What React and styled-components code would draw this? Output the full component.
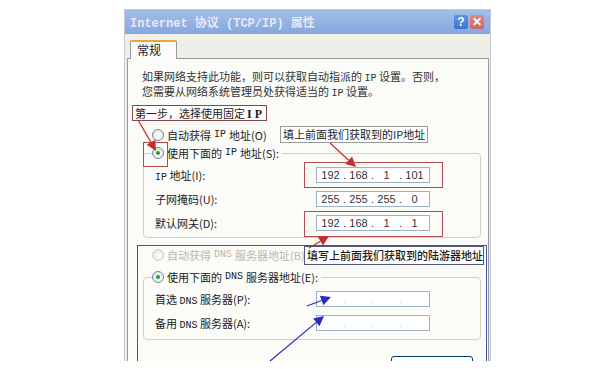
import styled, { createGlobalStyle } from 'styled-components';

const CJK = `"Noto Sans CJK SC", "Noto Sans", sans-serif`;

const GlobalStyle = createGlobalStyle`
  html, body { margin: 0; padding: 0; background: #fff; }
  * { box-sizing: border-box; }
`;

const Page = styled.div`
  position: relative;
  width: 600px;
  height: 369px;
  overflow: hidden;
  padding: 9px 0 0 124px;
  background: #fff;
  font-family: ${CJK};
`;

const Window = styled.div`
  width: 367px;
  height: 352px;
  overflow: hidden;
  background: #efeee7;
  border: 1px solid #c3cad6;
  border-bottom: none;
`;

const TitleBar = styled.div`
  height: 24px;
  display: flex;
  align-items: center;
  padding: 0 6px 0 5px;
  background: linear-gradient(#a3bde8, #86a7de);
`;

const Title = styled.div`
  font-family: "Liberation Mono", ${CJK};
  font-size: 12px;
  font-weight: bold;
  color: #e3e9f4;
  white-space: nowrap;
`;

const CapButtons = styled.div`
  display: flex;
  gap: 2px;
  margin-left: auto;
`;

const CapButton = styled.div`
  width: 14px;
  height: 14px;
  border-radius: 2px;
  background: ${(p) => p.$bg};
  color: #fff;
  font-family: "Liberation Sans", sans-serif;
  font-size: 12px;
  font-weight: bold;
  line-height: 14px;
  text-align: center;
`;

const Body = styled.div`
  padding: 6px 1px 0 2px;
`;

const TabStrip = styled.div`
  display: flex;
  padding-left: 3px;
`;

const Tab = styled.div`
  position: relative;
  z-index: 1;
  width: 47px;
  height: 19px;
  margin-bottom: -1px;
  padding-left: 6px;
  border: 1px solid #919b9c;
  border-top: 2px solid #f1a23a;
  border-bottom: none;
  border-radius: 2px 2px 0 0;
  background: #fcfcfa;
  font-size: 12px;
  line-height: 16px;
  color: #222;
`;

const Panel = styled.div`
  border: 1px solid #919b9c;
  background: #fbfbf8;
  padding: 10px 0 0 0;
  height: 400px;
`;

const Para = styled.p`
  margin: 0 0 0 14px;
  font-size: 11px;
  line-height: 14px;
  color: #333;
  white-space: nowrap;
`;

const Lat = styled.span`
  font-family: "Liberation Mono", monospace;
  font-size: 10px;
  line-height: 1;
`;

const RadioRow = styled.div`
  display: flex;
  align-items: center;
  gap: 3px;
  height: 18px;
  margin: ${(p) => p.$margin};
  font-size: 11px;
  color: ${(p) => (p.$disabled ? '#b9b9ad' : '#222')};
  white-space: nowrap;
`;

const Radio = styled.span`
  position: relative;
  width: 12px;
  height: 12px;
  flex: none;
  border-radius: 50%;
  border: 1px solid ${(p) => (p.$disabled ? '#cfcfc6' : '#6f88aa')};
  background: radial-gradient(circle at 60% 60%, #fff, #dddcd4);
  &::after {
    content: '';
    display: ${(p) => (p.$checked ? 'block' : 'none')};
    position: absolute;
    left: 3px;
    top: 3px;
    width: 4px;
    height: 4px;
    border-radius: 50%;
    background: #27a027;
  }
`;

const Group = styled.fieldset`
  margin: ${(p) => p.$margin};
  padding: 0 0 ${(p) => p.$bottom}px 0;
  border: 1px solid #d3d1c2;
  border-radius: 4px;
  min-width: 0;
`;

const Legend = styled.legend`
  display: flex;
  align-items: center;
  gap: 3px;
  height: 18px;
  margin-left: 8px;
  padding: 0 3px 0 0;
  font-size: 11px;
  color: #222;
  white-space: nowrap;
`;

const FieldList = styled.div`
  display: flex;
  flex-direction: column;
  gap: 8px;
  padding: ${(p) => p.$top}px 0 0 11px;
`;

const FieldRow = styled.div`
  display: flex;
  align-items: center;
  height: 16px;
`;

const Label = styled.span`
  width: 161px;
  flex: none;
  font-size: 11px;
  color: #222;
  white-space: nowrap;
`;

const IpBox = styled.div`
  display: flex;
  align-items: center;
  width: 114px;
  height: 16px;
  flex: none;
  padding-left: 3px;
  border: 1px solid #9fb1c7;
  background: #fff;
  font-family: "Liberation Sans", sans-serif;
  font-size: 11px;
  color: #333;
`;

const Octet = styled.span`
  width: 21px;
  text-align: center;
`;

const Dot = styled.span`
  width: 7px;
  text-align: center;
  color: ${(p) => (p.$empty ? '#c4c4c4' : '#333')};
`;

const ButtonRow = styled.div`
  display: flex;
  justify-content: flex-end;
  margin-top: 16px;
  padding-right: 15px;
`;

const Button = styled.div`
  width: 82px;
  height: 23px;
  border: 1px solid #003c74;
  border-radius: 3px;
  background: linear-gradient(#fff, #ecebe4);
`;

/* annotations drawn over the screenshot */
const Note = styled.div`
  position: absolute;
  left: ${(p) => p.$x}px;
  top: ${(p) => p.$y}px;
  width: ${(p) => p.$w}px;
  height: ${(p) => p.$h}px;
  border: 1px solid ${(p) => p.$border};
  background: #fff;
  font-size: 11px;
  font-weight: ${(p) => (p.$bold ? 500 : 400)};
  line-height: ${(p) => p.$h - 2}px;
  color: #1c1c1c;
  padding-left: 2px;
  white-space: nowrap;
`;

const Strong = styled.b`
  font-family: "Liberation Serif", serif;
  font-size: 12px;
  margin-left: 2px;
`;

const Mark = styled.div`
  position: absolute;
  left: ${(p) => p.$x}px;
  top: ${(p) => p.$y}px;
  width: ${(p) => p.$w}px;
  height: ${(p) => p.$h}px;
  border: ${(p) => p.$size || 1}px solid ${(p) => p.$color};
  border-bottom-width: ${(p) => (p.$open ? 0 : p.$size || 1)}px;
  pointer-events: none;
`;

const Arrows = styled.svg`
  position: absolute;
  left: 0;
  top: 0;
  pointer-events: none;
`;

function Arrow({ x1, y1, x2, y2, color }) {
  const a = Math.atan2(y2 - y1, x2 - x1);
  const L = 10;
  const W = 5;
  const bx = x2 - L * Math.cos(a);
  const by = y2 - L * Math.sin(a);
  const pts = [
    [x2, y2],
    [bx + W * Math.sin(a), by - W * Math.cos(a)],
    [bx - W * Math.sin(a), by + W * Math.cos(a)],
  ]
    .map((p) => p.join(','))
    .join(' ');
  return (
    <g>
      <line x1={x1} y1={y1} x2={bx} y2={by} stroke={color} strokeWidth="1.2" />
      <polygon points={pts} fill={color} />
    </g>
  );
}

function Ip({ value }) {
  const parts = value ? value.split('.') : ['', '', '', ''];
  return (
    <IpBox>
      {parts.flatMap((p, i) => [
        <Octet key={'o' + i}>{p}</Octet>,
        i < 3 ? <Dot key={'d' + i} $empty={!value}>.</Dot> : null,
      ])}
    </IpBox>
  );
}

export default function App() {
  return (
    <>
      <GlobalStyle />
      <Page>
        <Window>
          <TitleBar>
            <Title>Internet 协议 (TCP/IP) 属性</Title>
            <CapButtons>
              <CapButton $bg="linear-gradient(#5f93e0, #3f74cf)">?</CapButton>
              <CapButton $bg="linear-gradient(#e08a8a, #cf6467)">✕</CapButton>
            </CapButtons>
          </TitleBar>
          <Body>
            <TabStrip>
              <Tab>常规</Tab>
            </TabStrip>
            <Panel>
              <Para>
                如果网络支持此功能，则可以获取自动指派的 <Lat>IP</Lat> 设置。否则，
                <br />
                您需要从网络系统管理员处获得适当的 <Lat>IP</Lat> 设置。
              </Para>

              <RadioRow $margin="27px 0 0 24px">
                <Radio />
                自动获得 <Lat>IP</Lat> 地址(O)
              </RadioRow>

              <Group $margin="0 7px 0 15px" $bottom={6}>
                <Legend>
                  <Radio $checked />
                  使用下面的 <Lat>IP</Lat> 地址(S):
                </Legend>
                <FieldList $top={5}>
                  <FieldRow>
                    <Label><Lat>IP</Lat> 地址(I):</Label>
                    <Ip value="192.168.1.101" />
                  </FieldRow>
                  <FieldRow>
                    <Label>子网掩码(U):</Label>
                    <Ip value="255.255.255.0" />
                  </FieldRow>
                  <FieldRow>
                    <Label>默认网关(D):</Label>
                    <Ip value="192.168.1.1" />
                  </FieldRow>
                </FieldList>
              </Group>

              <RadioRow $margin="8px 0 0 24px" $disabled>
                <Radio $disabled />
                自动获得 <Lat>DNS</Lat> 服务器地址(B)
              </RadioRow>

              <Group $margin="4px 7px 0 15px" $bottom={8}>
                <Legend>
                  <Radio $checked />
                  使用下面的 <Lat>DNS</Lat> 服务器地址(E):
                </Legend>
                <FieldList $top={5}>
                  <FieldRow>
                    <Label>首选 <Lat>DNS</Lat> 服务器(P):</Label>
                    <Ip />
                  </FieldRow>
                  <FieldRow>
                    <Label>备用 <Lat>DNS</Lat> 服务器(A):</Label>
                    <Ip />
                  </FieldRow>
                </FieldList>
              </Group>

              <ButtonRow>
                <Button />
              </ButtonRow>
            </Panel>
          </Body>
        </Window>

        <Mark $x={137} $y={245} $w={350} $h={116} $color="#4d4da6" $size={1.5} $open />
        <Mark $x={143} $y={142} $w={25} $h={25} $color="#b24a4a" />
        <Mark $x={304} $y={162} $w={139} $h={26} $color="#b54c4c" $size={1.5} />
        <Mark $x={304} $y={211} $w={139} $h={26} $color="#b54c4c" $size={1.5} />

        <Note $x={132} $y={105} $w={135} $h={16} $border="#8b4747">
          第一步，选择使用固定<Strong>I P</Strong>
        </Note>
        <Note $x={280} $y={126} $w={148} $h={17} $border="#999">
          填上前面我们获取到的IP地址
        </Note>
        <Note $x={304} $y={246} $w={180} $h={19} $border="#55557a" $bold>
          填写上前面我们获取到的陆游器地址
        </Note>

        <Arrows width="600" height="369">
          <Arrow x1={138} y1={120} x2={156} y2={151} color="#c42f2f" />
          <Arrow x1={330} y1={143} x2={356} y2={167} color="#c42f2f" />
          <Arrow x1={309} y1={248} x2={329} y2={236} color="#c42f2f" />
          <Arrow x1={307} y1={306} x2={331} y2={297} color="#2b2bc4" />
          <Arrow x1={270} y1={361} x2={324} y2={316} color="#2b2bc4" />
        </Arrows>
      </Page>
    </>
  );
}
